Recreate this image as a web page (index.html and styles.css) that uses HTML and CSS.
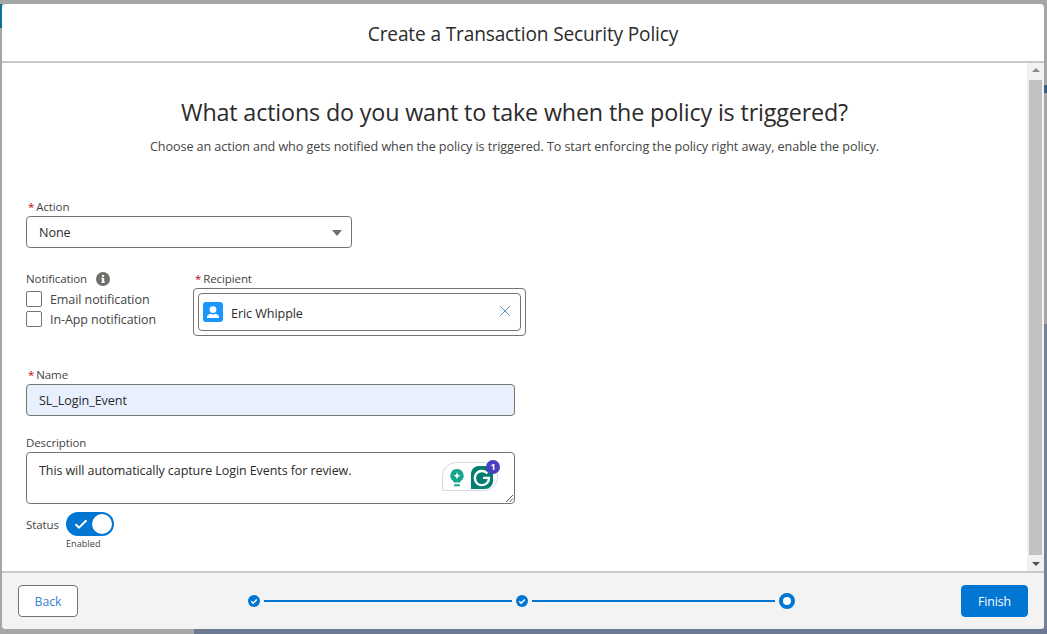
FILE: index.html
```html
<!DOCTYPE html>
<html lang="en">
<head>
<meta charset="utf-8">
<title>Create a Transaction Security Policy</title>
<link rel="stylesheet" href="styles.css">
</head>
<body>
<div class="modal">
  <header class="modal-header"><h1 class="modal-title">Create a Transaction Security Policy</h1></header>
  <div class="modal-middle">
    <main class="content">
      <h2 class="question">What actions do you want to take when the policy is triggered?</h2>
      <p class="hint">Choose an action and who gets notified when the policy is triggered. To start enforcing the policy right away, enable the policy.</p>

      <div class="field action-field">
        <div class="label"><span class="req">*</span>Action</div>
        <div class="control select"><span>None</span><span class="caret"></span></div>
      </div>

      <div class="notify-row">
        <div class="notify">
          <div class="label">Notification
            <svg class="info" viewBox="0 0 14 14" width="14" height="14"><circle cx="7" cy="7" r="7" fill="#706e6b"/><rect x="6" y="6" width="2.2" height="4.6" fill="#fff"/><rect x="5.2" y="6" width="2" height="1" fill="#fff"/><rect x="5.2" y="9.7" width="3.8" height="1" fill="#fff"/><circle cx="7" cy="4" r="1.2" fill="#fff"/></svg>
          </div>
          <div class="check-row"><span class="check"></span>Email notification</div>
          <div class="check-row"><span class="check"></span>In-App notification</div>
        </div>
        <div class="recipient">
          <div class="label"><span class="req">*</span>Recipient</div>
          <div class="rec-outer">
            <div class="rec-pill">
              <span class="avatar"><svg viewBox="0 0 20 20" width="20" height="20"><circle cx="10" cy="7.6" r="3.4" fill="#fff"/><path d="M4 16v-1c0-1.8 1.6-2.8 3.6-3.3 1.4 1 3.4 1 4.8 0 2 .5 3.6 1.5 3.6 3.3v1z" fill="#fff"/></svg></span>
              <span class="rec-name">Eric Whipple</span>
              <svg class="rec-x" viewBox="0 0 12 12" width="12" height="12"><path d="M1.2 1.2l9.6 9.6M10.8 1.2l-9.6 9.6" stroke="#5a94b8" stroke-width="1" fill="none"/></svg>
            </div>
          </div>
        </div>
      </div>

      <div class="field name-field">
        <div class="label"><span class="req">*</span>Name</div>
        <div class="control name-input">SL_Login_Event</div>
      </div>

      <div class="field desc-field">
        <div class="label">Description</div>
        <div class="control textarea">This will automatically capture Login Events for review.
          <div class="grammarly">
            <svg viewBox="0 0 18 22" width="16" height="20"><path d="M9 1a7.4 7.4 0 0 0-4.6 13.2c.7.6 1 1.200 1 2h7.200c0-.8.3-1.400 1-2A7.400 7.400 0 0 0 9 1z" fill="#15a58c"/><path d="M9 4.500l1.200 2.800 2.800 1.200-2.800 1.200L9 12.500l-1.200-2.800L5 8.500l2.800-1.200z" fill="#fff"/><rect x="5.600" y="18" width="6.800" height="2.400" rx="1" fill="#15a58c"/></svg>
            <span class="g-tile"><svg viewBox="0 0 24 24" width="22" height="22"><path d="M17.800 8.200A7.700 7.700 0 1 0 19.600 13h-6.400" fill="none" stroke="#fff" stroke-width="2.500"/></svg></span>
            <span class="g-badge">1</span>
          </div>
          <svg class="grip" viewBox="0 0 10 10" width="10" height="10"><path d="M9 2L2 9M9 5.500L5.500 9" stroke="#555" stroke-width="1" fill="none"/></svg>
        </div>
      </div>

      <div class="status-row">
        <span class="status-label">Status</span>
        <div class="toggle-box">
          <span class="toggle">
            <svg viewBox="0 0 14 12" width="14" height="12"><path d="M1.500 6.200l3.500 3.500 7.500-7.500" stroke="#fff" stroke-width="2" fill="none"/></svg>
            <span class="knob"></span>
          </span>
          <span class="toggle-text">Enabled</span>
        </div>
      </div>
    </main>
    <div class="scrollbar">
      <span class="arrow-up"></span>
      <span class="thumb"></span>
      <span class="arrow-down"></span>
    </div>
  </div>
  <footer class="modal-footer">
    <button class="btn btn-back">Back</button>
    <div class="steps">
      <span class="dot"><svg viewBox="0 0 12 12" width="12" height="12"><circle cx="6" cy="6" r="6" fill="#0176d3"/><path d="M3.200 6.200l2 2 3.600-3.800" stroke="#fff" stroke-width="1.500" fill="none"/></svg></span>
      <span class="line line-one"></span>
      <span class="dot"><svg viewBox="0 0 12 12" width="12" height="12"><circle cx="6" cy="6" r="6" fill="#0176d3"/><path d="M3.200 6.200l2 2 3.600-3.800" stroke="#fff" stroke-width="1.500" fill="none"/></svg></span>
      <span class="line line-two"></span>
      <span class="ring"></span>
    </div>
    <button class="btn btn-finish">Finish</button>
  </footer>
</div>
</body>
</html>
```
FILE: styles.css
```css
* { box-sizing: border-box; }
html, body { margin: 0; height: 634px; overflow: hidden; }
body {
  width: 1047px;
  padding: 4px 3px 5px 2px;
  font-family: "Open Sans", "Noto Sans", sans-serif;
  color: #3e3e3c;
  background:
    linear-gradient(#6b7a92, #6b7a92) 194px 100% / 853px 5px no-repeat,
    linear-gradient(#76829a, #76829a) 100% 100% / 3px 310px no-repeat,
    linear-gradient(#3a5f85, #3a5f85) 100% 85px / 3px 8px no-repeat,
    linear-gradient(#0f6f99, #0f6f99) 0 4px / 2px 24px no-repeat,
    #a6a6a6;
}
.modal {
  height: 625px;
  display: flex;
  flex-direction: column;
  background: #fff;
  border-radius: 4px;
  overflow: hidden;
}
.modal-header {
  height: 59px;
  flex: none;
  display: flex;
  align-items: center;
  justify-content: center;
  border-bottom: 2px solid #c9c9c9;
  padding-top: 3px;
}
.modal-title { margin: 0; font-size: 19.100px; font-weight: 400; color: #2b2b2b; letter-spacing: -.15px; }
.modal-middle { flex: 1; display: flex; min-height: 0; }
.content { flex: 1; padding: 0 24px; min-width: 0; }
.question {
  margin: 33px 0 0;
  height: 33px;
  line-height: 33px;
  text-align: center;
  font-size: 23.300px;
  font-weight: 400;
  color: #2b2b2b;
  letter-spacing: -.15px;
}
.hint {
  margin: 9px 0 0;
  height: 18px;
  line-height: 18px;
  text-align: center;
  font-size: 12.600px;
  color: #444;
  letter-spacing: -.08px;
}
.label { font-size: 11.500px; line-height: 16px; height: 16px; color: #444; letter-spacing: -.1px; white-space: nowrap; }
.req { color: #ba0517; margin: 0 2px 0 2px; }
.control {
  border: 1px solid #747474;
  border-radius: 4px;
  font-size: 12.600px;
  color: #2b2b2b;
  background: #fff;
  letter-spacing: -.08px;
}
.action-field { margin-top: 43px; }
.select {
  width: 326px;
  height: 32px;
  margin-top: 1px;
  padding: 0 12px;
  display: flex;
  align-items: center;
  justify-content: space-between;
}
.caret { width: 0; height: 0; margin-top: 2px; border: 5px solid transparent; border-top: 6px solid #706e6b; border-bottom: 0; border-left-width: 5.500px; border-right-width: 5.500px; margin-right: -3px; }
.notify-row { display: flex; margin-top: 23px; }
.notify { width: 167px; }
.label .info { vertical-align: -3px; margin-left: 6px; }
.check-row {
  display: flex;
  align-items: center;
  height: 16px;
  margin-top: 4px;
  font-size: 12.500px;
  color: #444;
  letter-spacing: -.08px;
}
.notify .label + .check-row { margin-top: 4px; }
.check { width: 16px; height: 16px; border: 1px solid #747474; border-radius: 2px; margin-right: 8px; background: #fff; }
.recipient { width: 333px; }
.rec-outer { height: 48px; border: 1px solid #747474; border-radius: 4px; padding: 4px; margin-top: 1px; }
.rec-pill { height: 38px; border: 1px solid #747474; border-radius: 4px; display: flex; align-items: center; padding: 2px 10px 0 4px; font-size: 12.600px; color: #2b2b2b; letter-spacing: -.08px; }
.avatar { width: 20px; height: 20px; background: #1b96ff; border-radius: 3px; margin: -2px 8px 0 0; display: block; }
.avatar svg { display: block; }
.rec-x { margin: -4px -1px 0 0; }
.rec-name { flex: 1; }
.name-field { margin-top: 31px; }
.name-input { width: 489px; height: 32px; margin-top: 1px; padding: 0 12px; display: flex; align-items: center; background: #e8f0fe; }
.desc-field { margin-top: 19px; }
.textarea { position: relative; width: 489px; height: 52px; margin-top: 1px; padding: 7px 12px; line-height: 22px; font-size: 12.500px; }
.grammarly {
  position: absolute;
  right: 16px;
  top: 9px;
  width: 56px;
  height: 29px;
  border: 1px solid #d5d9e6;
  border-radius: 14px 14px 14px 0;
  display: flex;
  align-items: center;
  gap: 6px;
  padding: 2px 0 0 6px;
}
.g-tile { display: block; width: 22px; height: 23px; background: #027e6f; border-radius: 8px 8px 8px 0; }
.g-tile svg { display: block; }
.g-badge {
  position: absolute;
  right: -3px;
  top: -3px;
  width: 14px;
  height: 14px;
  border-radius: 50%;
  background: #4a3fc0;
  color: #fff;
  font-size: 9px;
  font-weight: 700;
  line-height: 14px;
  text-align: center;
}
.grip { position: absolute; right: 0; bottom: 0; }
.status-row { display: flex; margin-top: 8px; }
.status-label { font-size: 11.500px; line-height: 25px; width: 40px; letter-spacing: -.1px; color: #444; }
.toggle-box { display: flex; flex-direction: column; }
.toggle { width: 48px; height: 24px; background: #0176d3; border-radius: 12px; display: flex; align-items: center; justify-content: space-between; padding: 0 2px 0 8px; }
.toggle svg { display: block; }
.knob { width: 20px; height: 20px; border-radius: 50%; background: #fff; }
.toggle-text { font-size: 9.200px; line-height: 14px; margin-top: 1px; color: #444; }
.scrollbar { flex: none; width: 17px; background: #f1f1f1; display: flex; flex-direction: column; align-items: center; }
.arrow-up { width: 0; height: 0; margin-top: 5px; border: 4px solid transparent; border-bottom: 4px solid #8a8a8a; border-top: 0; }
.thumb { flex: 1; width: 13px; background: #c1c1c1; margin: 8px 0 7px; }
.arrow-down { width: 0; height: 0; margin-bottom: 5px; border: 4px solid transparent; border-top: 4px solid #505050; border-bottom: 0; }
.modal-footer {
  flex: none;
  height: 58px;
  background: #f3f3f3;
  border-top: 2px solid #c9c9c9;
  display: flex;
  align-items: center;
  padding: 0 16px 0 16px;
}
.btn { height: 32px; border-radius: 4px; font: 400 12.300px "Open Sans", "Noto Sans", sans-serif; padding: 0; letter-spacing: -.08px; }
.btn-back { width: 60px; background: #fff; border: 1px solid #747474; color: #3a80d0; }
.btn-finish { width: 67px; background: #0176d3; border: 1px solid #0176d3; color: #fff; margin-left: auto; }
.steps { display: flex; align-items: center; margin-left: 170px; }
.dot { display: block; width: 12px; height: 12px; }
.dot svg { display: block; }
.line { height: 2px; background: #0176d3; margin: -1px 4px 0 4px; display: block; }
.line-one { width: 248px; }
.line-two { width: 243px; }
.ring { width: 16px; height: 16px; border: 4px solid #0176d3; border-radius: 50%; background: #fff; display: block; margin-top: -1px; }
```
